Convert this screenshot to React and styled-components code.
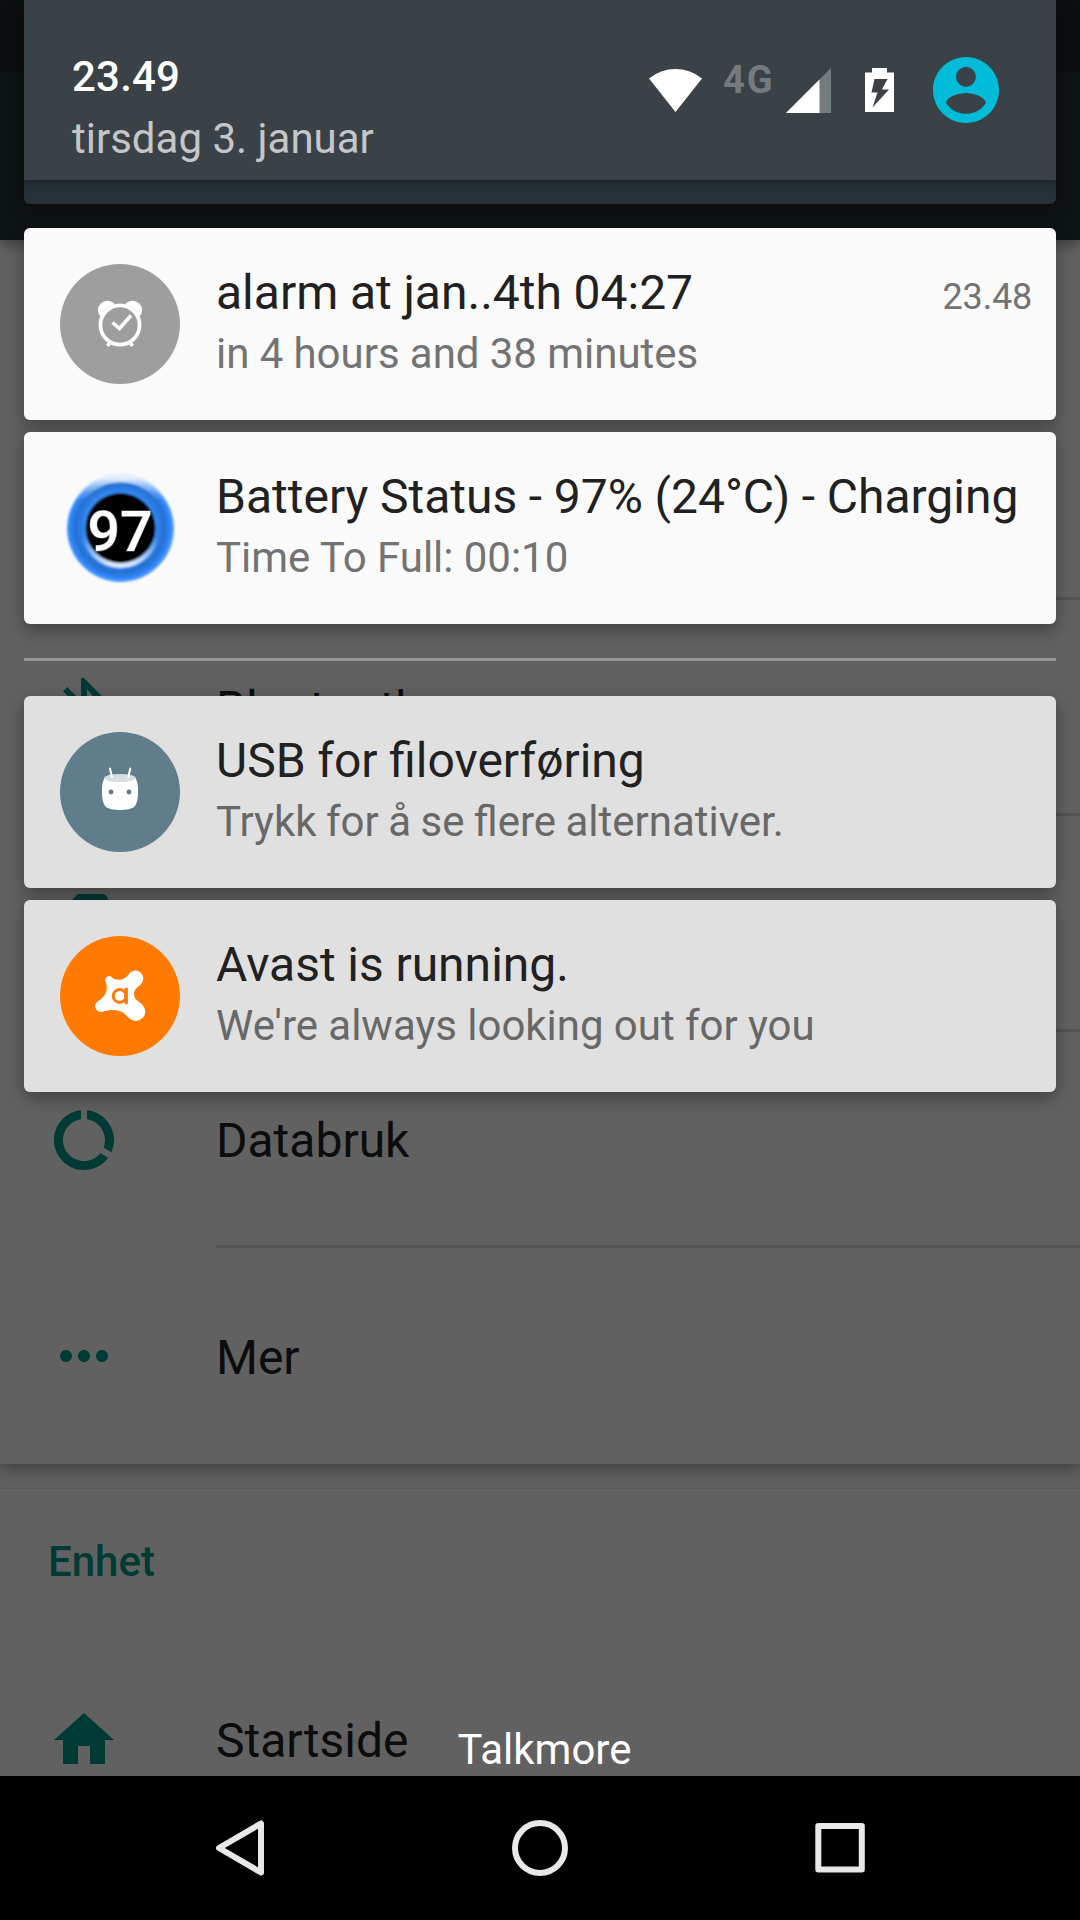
import React from 'react';
import styled, { createGlobalStyle } from 'styled-components';

const GlobalStyle = createGlobalStyle`
  * { box-sizing: border-box; }
  body { margin: 0; background: #000; }
  svg { display: block; flex: none; }
`;

const Phone = styled.div`
  position: relative;
  display: flex;
  flex-direction: column;
  width: 1080px;
  height: 1920px;
  overflow: hidden;
  background: #000;
  font-family: Roboto, "Liberation Sans", sans-serif;
`;

/* Settings screen behind the shade */

const Screen = styled.main`
  isolation: isolate;
  height: 1776px;
  overflow: hidden;
  display: flex;
  flex-direction: column;
  background: #f7f7f7;
`;

const StatusStrip = styled.div`
  flex: none;
  height: 72px;
  background: #21272a;
`;

const Toolbar = styled.div`
  flex: none;
  height: 168px;
  background: #263238;
  box-shadow: 0 4px 14px rgba(0, 0, 0, 0.4);
  clip-path: inset(0 0 -40px 0);
  z-index: 1;
`;

const Section = styled.section`
  flex: none;
  display: flex;
  flex-direction: column;
  background: #fafafa;
  ${(p) => p.$raised && 'padding-top: 144px; box-shadow: 0 4px 16px rgba(0, 0, 0, 0.36); margin-bottom: 24px;'}
  ${(p) => p.$ruled && 'box-shadow: inset 0 1px 0 #e6e6e6;'}
`;

const SectionTitle = styled.h2`
  margin: 0;
  height: 144px;
  padding: 2px 48px 0;
  display: flex;
  align-items: center;
  font-size: 42px;
  font-weight: 500;
  color: #009688;
`;

const SettingRow = styled.div`
  display: flex;
  height: 216px;
  padding-left: 48px;
  align-items: center;
  gap: 96px;
  color: #009688;
`;

const SettingLabel = styled.div`
  flex: 1;
  height: 216px;
  display: flex;
  align-items: center;
  padding-top: 3px;
  font-size: 48px;
  color: #212121;
  border-bottom: ${(p) => (p.$last ? 'none' : '3px solid #d9d9d9')};
`;

/* Notification shade */

const Shade = styled.div`
  position: absolute;
  top: 0;
  left: 0;
  width: 1080px;
  height: 1776px;
  display: flex;
  flex-direction: column;
  padding: 0 24px;
  background: rgba(0, 0, 0, 0.61);
`;

const HeaderPanel = styled.div`
  height: 204px;
  background: #263238;
  border-radius: 0 0 6px 6px;
  box-shadow: 0 4px 18px rgba(0, 0, 0, 0.45);
  margin-bottom: 24px;
  overflow: hidden;
`;

const HeaderBar = styled.header`
  height: 180px;
  padding: 0 57px 0 48px;
  display: flex;
  justify-content: space-between;
  background: #3a4248;
  box-shadow: 0 2px 10px rgba(0, 0, 0, 0.4);
`;

const Clock = styled.div`
  padding-top: 48px;
  display: flex;
  flex-direction: column;
`;

const Time = styled.span`
  font-size: 42px;
  font-weight: 500;
  line-height: 58px;
  letter-spacing: 0.2px;
  color: #fff;
`;

const DateText = styled.span`
  padding-top: 4px;
  font-size: 42px;
  line-height: 58px;
  color: #c4c6c8;
`;

const StatusIcons = styled.div`
  height: 180px;
  display: flex;
  align-items: center;
`;

const NetworkType = styled.span`
  width: 63px;
  margin: 0 0 20px 21px;
  font-size: 38px;
  font-weight: 700;
  line-height: 44px;
  letter-spacing: 2px;
  color: #737b7f;
`;

const IconSlot = styled.span`
  margin-left: ${(p) => p.$gap}px;
`;

const NotificationList = styled.div`
  display: flex;
  flex-direction: column;
  gap: 12px;
`;

const Notification = styled.article`
  height: 192px;
  display: flex;
  align-items: center;
  gap: 36px;
  padding: 0 24px 0 36px;
  border-radius: 6px;
  background: ${(p) => (p.$muted ? '#e0e0e0' : '#fafafa')};
  color: ${(p) => (p.$muted ? '#686868' : '#737373')};
  box-shadow: 0 6px 18px rgba(0, 0, 0, 0.34);
`;

const NotificationBody = styled.div`
  flex: 1;
  height: 192px;
  padding-top: 33px;
  white-space: nowrap;
`;

const TitleLine = styled.div`
  display: flex;
  align-items: baseline;
  justify-content: space-between;
`;

const Title = styled.h3`
  margin: 0;
  font-size: 48px;
  font-weight: 400;
  line-height: 64px;
  word-spacing: -0.25px;
  color: #212121;
`;

const Stamp = styled.time`
  font-size: 36px;
  letter-spacing: -0.2px;
`;

const Subtitle = styled.p`
  margin: 0;
  font-size: 42px;
  line-height: 57px;
  word-spacing: ${(p) => p.$wordGap ?? -0.2}px;
`;

const Separator = styled.hr`
  flex: none;
  width: 100%;
  height: 3px;
  margin: 34px 0 35px;
  border: 0;
  background: #969696;
`;

const Carrier = styled.div`
  margin: auto 0 0 9px;
  padding-bottom: 2px;
  text-align: center;
  font-size: 42px;
  line-height: 49px;
  color: #fff;
`;

const NavBar = styled.nav`
  height: 144px;
  padding: 0 90px;
  display: grid;
  grid-template-columns: repeat(3, 1fr);
  place-items: center;
  background: #000;
`;

const WifiIcon = () => (
  <svg width="53" height="43" viewBox="0 0 53 43">
    <path d="M0 9.500Q11.500 0 26.500 0T53 9.500L26.500 43z" fill="#fff" />
  </svg>
);

const SignalIcon = () => (
  <svg width="46" height="45" viewBox="0 0 46 45">
    <path d="M45 0V45H0z" fill="#737b7f" />
    <path d="M33.500 11.500V45H0z" fill="#fff" />
  </svg>
);

const BatteryIcon = () => (
  <svg width="29" height="44" viewBox="0 0 29 44">
    <path d="M0 4.500H7V0H22V4.500H29V44H0z" fill="#fff" />
    <path d="M9.500 11H22.500L17 21.500H24L7.500 39.500L12.500 24.500H6.500z" fill="#3a4248" />
  </svg>
);

const AvatarIcon = () => (
  <svg width="66" height="66" viewBox="2 2 20 20">
    <path
      fill="#00bcd8"
      d="M12 2C6.480 2 2 6.480 2 12s4.480 10 10 10 10-4.480 10-10S17.520 2 12 2zm0 3c1.660 0 3 1.340 3 3s-1.340 3-3 3-3-1.340-3-3 1.340-3 3-3zm0 14.200c-2.500 0-4.710-1.280-6-3.220.030-1.990 4-3.080 6-3.080 1.990 0 5.970 1.090 6 3.080-1.290 1.940-3.500 3.220-6 3.220z"
    />
  </svg>
);

const AlarmBadge = () => (
  <svg width="120" height="120" viewBox="0 0 120 120" fill="none" stroke="#fff">
    <circle cx="60" cy="60" r="60" fill="#9e9e9e" stroke="none" />
    <circle cx="47.500" cy="46.300" r="9.500" fill="#fff" stroke="none" />
    <circle cx="72.500" cy="46.300" r="9.500" fill="#fff" stroke="none" />
    <circle cx="60" cy="61" r="21.500" fill="#9e9e9e" stroke="none" />
    <circle cx="60" cy="61" r="19.600" strokeWidth="3.800" />
    <path d="M52.500 58.500L59.500 64.500L71 51.500M49.500 79L47.500 82M70.500 79L72.500 82" strokeWidth="3.600" />
  </svg>
);

const BatteryBadge = () => (
  <svg width="120" height="120" viewBox="0 0 120 120">
    <defs>
      <radialGradient id="ring" gradientUnits="userSpaceOnUse" cx="60" cy="60" r="54">
        <stop offset="0.640" stopColor="#3c8ff5" />
        <stop offset="0.730" stopColor="#2b7de6" />
        <stop offset="0.830" stopColor="#2670d0" />
        <stop offset="0.930" stopColor="#2f86fb" />
        <stop offset="1" stopColor="#5ba2fd" />
      </radialGradient>
      <linearGradient id="glow" x1="0" y1="0" x2="0" y2="1">
        <stop offset="0" stopColor="#e4effd" />
        <stop offset="0.220" stopColor="#a9cefc" stopOpacity="0" />
      </linearGradient>
      <linearGradient id="shine" x1="0" y1="0" x2="0" y2="1">
        <stop offset="0.600" stopColor="#cfe2fb" stopOpacity="0" />
        <stop offset="0.950" stopColor="#d8e7fb" />
      </linearGradient>
      <filter id="soft" x="-10%" y="-10%" width="120%" height="120%">
        <feGaussianBlur stdDeviation="1.300" />
      </filter>
    </defs>
    <g filter="url(#soft)">
      <circle cx="60.500" cy="60.500" r="53.500" fill="url(#ring)" />
      <circle cx="60.500" cy="60" r="50" fill="none" stroke="url(#glow)" strokeWidth="9" />
      <circle cx="60.500" cy="61" r="39" fill="url(#shine)" />
      <circle cx="60.500" cy="60" r="35" fill="#000" />
    </g>
    <text
      x="27.500"
      y="82.500"
      textLength="65"
      lengthAdjust="spacingAndGlyphs"
      fontFamily="Roboto, sans-serif"
      fontSize="56"
      fontWeight="500"
      fill="#fff"
      stroke="#fff"
      strokeOpacity="0.400"
      strokeWidth="1.200"
    >
      97
    </text>
  </svg>
);

const AndroidBadge = () => (
  <svg width="120" height="120" viewBox="0 0 120 120">
    <circle cx="60" cy="60" r="60" fill="#607d8b" />
    <path
      d="M44.500 46C42 51 42 55 42 61C42 66 43 71 45 74C47 77 55 78 60 78C65 78 73 77 75 74C77 71 78 66 78 61C78 55 78 51 75.500 46z"
      fill="#fff"
    />
    <ellipse cx="60" cy="46" rx="15.600" ry="4.100" fill="#d7dee2" />
    <path d="M50 36.500L52 45M70.300 36.500L68.300 45" stroke="#fff" strokeWidth="2" strokeLinecap="round" />
    <circle cx="51" cy="60" r="2.400" fill="#607d8b" />
    <circle cx="69" cy="60" r="2.400" fill="#607d8b" />
  </svg>
);

const AvastBadge = () => (
  <svg width="120" height="120" viewBox="0 0 120 120">
    <circle cx="60" cy="60" r="60" fill="#ff7a00" />
    <path
      d="M45.600 45.800A3.900 3.900 0 0 1 52 41.500C55 44.600 63.500 45 68 39.300A8 8 0 1 1 81.500 47.600C79 51 74 52.500 74 58.300C74 63.500 79 65.500 82.200 68.500A9.400 9.400 0 0 1 69.500 82.500C66.500 80 64.500 76.800 60 75.200C54 73.400 49 74 42.500 75.700A5.800 5.800 0 0 1 37.500 65.500C43 62.500 49.500 55 45.600 45.800z"
      fill="#fff"
    />
    <circle cx="59.600" cy="60" r="6.400" fill="none" stroke="#ff7a00" strokeWidth="3" />
    <path d="M66.200 53.300V66.700" stroke="#ff7a00" strokeWidth="3.400" strokeLinecap="round" />
  </svg>
);

const SETTING_ICONS = {
  bluetooth:
    'M17.710 7.710L12 2h-1v7.590L6.410 5 5 6.410 10.590 12 5 17.590 6.410 19 11 14.410V22h1l5.710-5.710-4.300-4.290 4.300-4.290zM13 5.830l1.880 1.880L13 9.590V5.830zm1.880 10.460L13 18.170v-3.760l1.880 1.880z',
  sim: 'M19.990 4c0-1.100-.890-2-1.990-2h-8L4 8v12c0 1.100.900 2 2 2h12.010c1.100 0 1.990-.900 1.990-2l-.010-16z',
  data: 'M13 2.050v3.030c3.390.490 6 3.390 6 6.920 0 .900-.180 1.750-.480 2.540l2.600 1.530c.560-1.240.880-2.620.880-4.070 0-5.180-3.950-9.450-9-9.950zM12 19c-3.870 0-7-3.130-7-7 0-3.530 2.610-6.430 6-6.920V2.050c-5.060.500-9 4.760-9 9.950 0 5.520 4.470 10 9.990 10 3.310 0 6.240-1.610 8.060-4.090l-2.600-1.530C16.170 17.980 14.210 19 12 19z',
  more: 'M6 10c-1.100 0-2 .900-2 2s.900 2 2 2 2-.900 2-2-.900-2-2-2zm12 0c-1.100 0-2 .900-2 2s.900 2 2 2 2-.900 2-2-.900-2-2-2zm-6 0c-1.100 0-2 .900-2 2s.900 2 2 2 2-.900 2-2-.900-2-2-2z',
  home: 'M10 20v-6h4v6h5v-8h3L12 3 2 12h3v8z',
};

const Setting = ({ icon, label, last }) => (
  <SettingRow>
    <svg width="72" height="72" viewBox="0 0 24 24" fill="currentColor">
      <path d={SETTING_ICONS[icon]} />
    </svg>
    <SettingLabel $last={last}>{label}</SettingLabel>
  </SettingRow>
);

const NotificationCard = ({ badge, title, subtitle, stamp, muted, wordGap }) => (
  <Notification $muted={muted}>
    {badge}
    <NotificationBody>
      <TitleLine>
        <Title>{title}</Title>
        {stamp && <Stamp>{stamp}</Stamp>}
      </TitleLine>
      <Subtitle $wordGap={wordGap}>{subtitle}</Subtitle>
    </NotificationBody>
  </Notification>
);

export default function App() {
  return (
    <Phone>
      <GlobalStyle />
      <Screen>
        <StatusStrip />
        <Toolbar />
        <Section $raised>
          <SettingRow>
            <SettingLabel />
          </SettingRow>
          <Setting icon="bluetooth" label="Bluetooth" />
          <Setting icon="sim" />
          <Setting icon="data" label="Databruk" />
          <Setting icon="more" label="Mer" last />
        </Section>
        <Section $ruled>
          <SectionTitle>Enhet</SectionTitle>
          <Setting icon="home" label="Startside" />
        </Section>
      </Screen>

      <Shade>
        <HeaderPanel>
          <HeaderBar>
            <Clock>
              <Time>23.49</Time>
              <DateText>tirsdag 3. januar</DateText>
            </Clock>
            <StatusIcons>
              <WifiIcon />
              <NetworkType>4G</NetworkType>
              <SignalIcon />
              <IconSlot $gap={33}>
                <BatteryIcon />
              </IconSlot>
              <IconSlot $gap={39}>
                <AvatarIcon />
              </IconSlot>
            </StatusIcons>
          </HeaderBar>
        </HeaderPanel>

        <NotificationList>
          <NotificationCard
            badge={<AlarmBadge />}
            title="alarm at jan..4th 04:27"
            subtitle="in 4 hours and 38 minutes"
            stamp="23.48"
          />
          <NotificationCard
            badge={<BatteryBadge />}
            title="Battery Status - 97% (24°C) - Charging"
            subtitle="Time To Full: 00:10"
          />
        </NotificationList>
        <Separator />
        <NotificationList>
          <NotificationCard
            muted
            badge={<AndroidBadge />}
            title="USB for filoverføring"
            subtitle="Trykk for å se flere alternativer."
            wordGap={-1}
          />
          <NotificationCard
            muted
            badge={<AvastBadge />}
            title="Avast is running."
            subtitle="We're always looking out for you"
          />
        </NotificationList>
        <Carrier>Talkmore</Carrier>
      </Shade>

      <NavBar>
        <svg width="60" height="60" viewBox="0 0 60 60" fill="none" stroke="#e8e8e8" strokeWidth="6" strokeLinejoin="round">
          <path d="M9 30L51 5.500V54.500z" />
        </svg>
        <svg width="60" height="60" viewBox="0 0 60 60" fill="none" stroke="#e8e8e8" strokeWidth="6">
          <circle cx="30" cy="30" r="25" />
        </svg>
        <svg width="60" height="60" viewBox="0 0 60 60" fill="none" stroke="#e8e8e8" strokeWidth="6" strokeLinejoin="round">
          <rect x="8.300" y="8" width="43.500" height="43.500" />
        </svg>
      </NavBar>
    </Phone>
  );
}
